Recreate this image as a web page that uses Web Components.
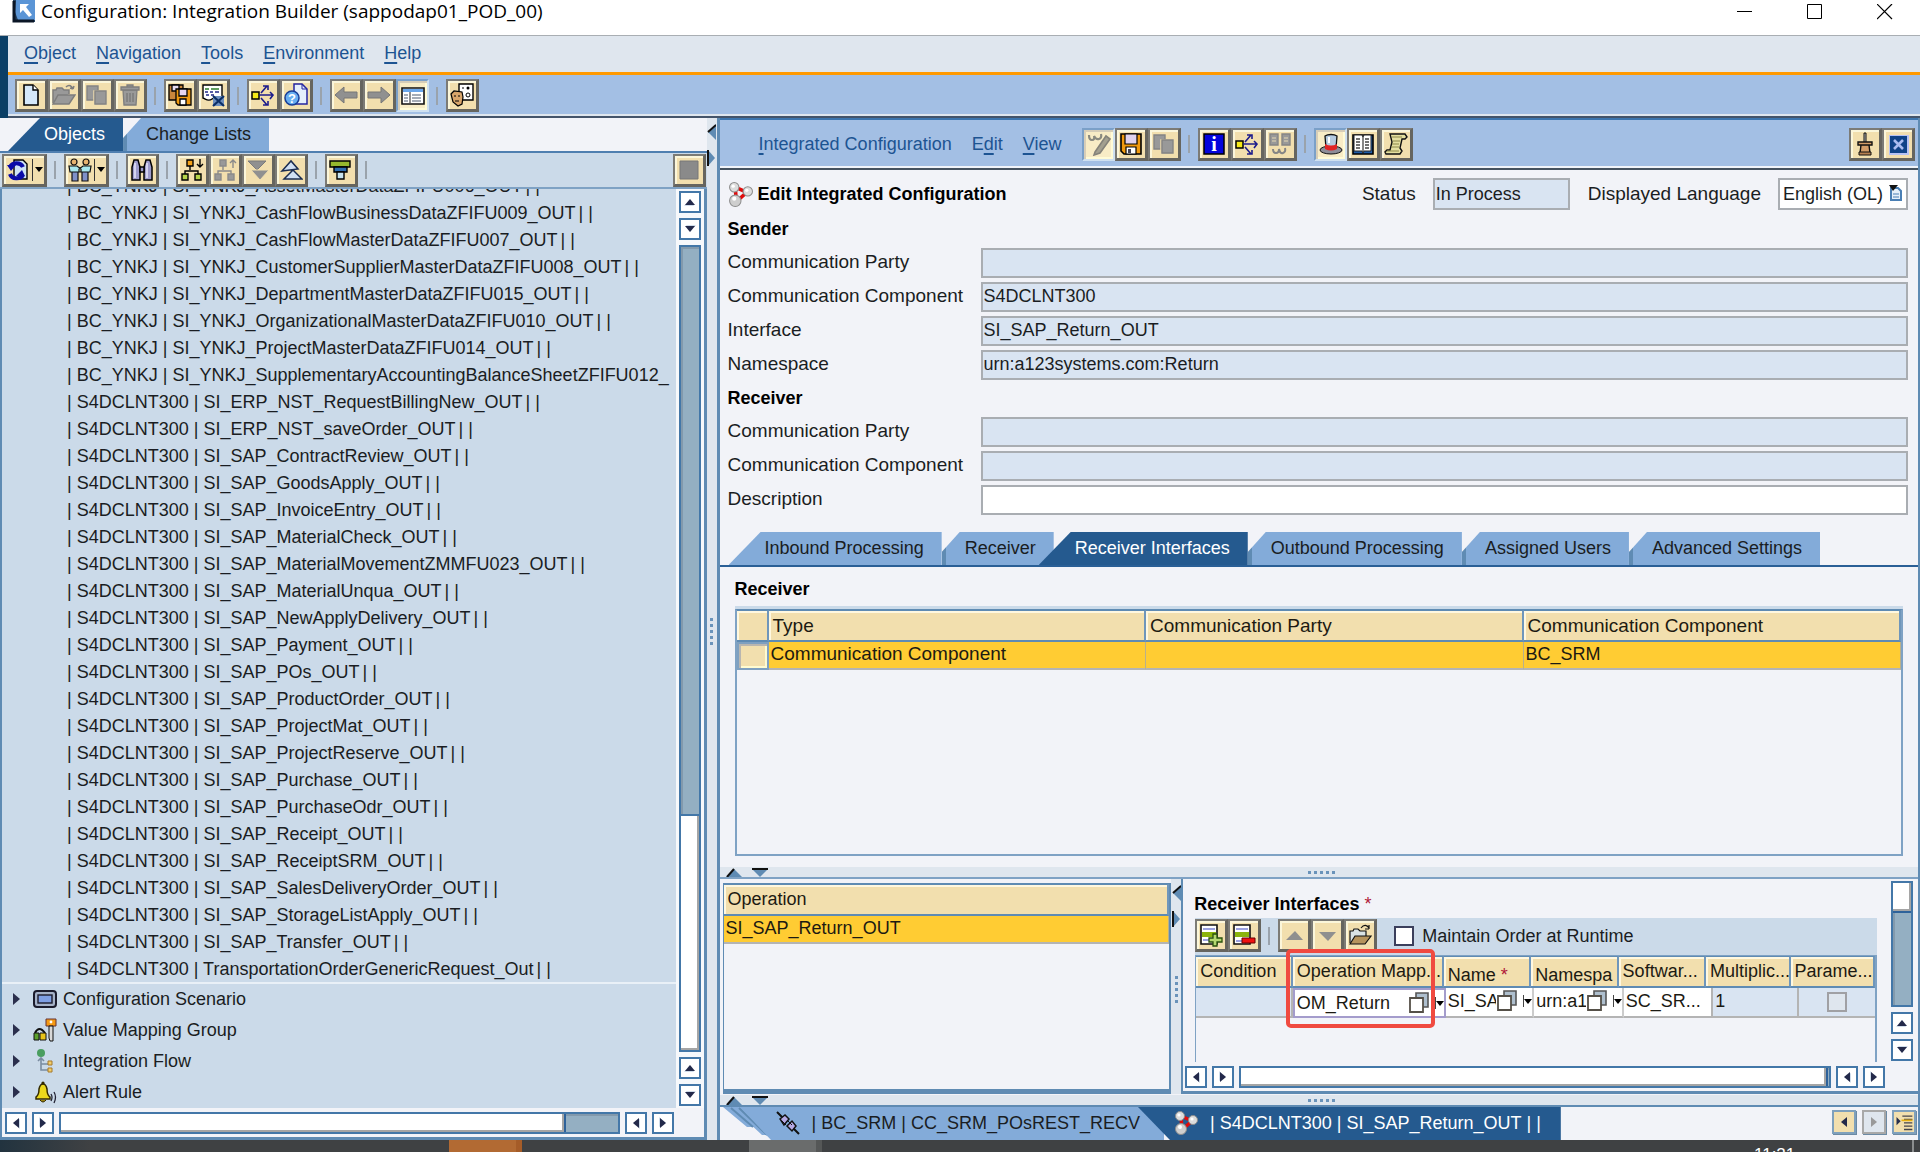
<!DOCTYPE html>
<html lang="en">
<head>
<meta charset="utf-8">
<title>Configuration: Integration Builder</title>
<style>
  html, body { margin: 0; height: 100%; }
  body { font: 18px/22px "Liberation Sans", Arial, sans-serif; color: #1a1d22; overflow: hidden; }
</style>
</head>
<body>
<builder-app></builder-app>

<script>
const ICONS = {
  newdoc: '<path d="M5 2h9l5 5v15H5z" fill="#d5e8fa" stroke="#000" stroke-width="1.6"/><path d="M14 2v5h5" fill="#fff" stroke="#000" stroke-width="1.4"/>',
  folderoff: '<g fill="#999" stroke="#7d7d7d" stroke-width="1.5"><path d="M1 20V7h3l1-2h5l2 2h5v4"/><path d="M1 21l5-9h17l-6 9z"/><path d="M14 4c3-3 6-1 7 2m0 0l-3-1m3 1l1-3" fill="none"/></g>',
  folder: '<g stroke="#111" stroke-width="1.2"><path d="M2 20V8h3l1-2h4l2 2h6v5" fill="#d9e2e4"/><path d="M2 21l5-8h16l-6 8z" fill="#b5935c"/><path d="M13 5c3-4 6-3 8 0m0 1h-4m4 0V2" fill="none"/></g>',
  copyoff: '<g fill="#999" stroke="#848484" stroke-width="1.4"><path d="M2 3h11v14H2z"/><path d="M9 8h12v14H9z" stroke="#f2dfae"/><path d="M10 8h11v13H10z"/></g>',
  trash: '<g fill="#999" stroke="#7d7d7d" stroke-width="1.3"><path d="M5 7h14l-1 15H6z"/><path d="M3 4h18v3H3zM9 4V2h6v2"/><path d="M9 10v9M12 10v9M15 10v9" stroke="#777"/></g>',
  saveall: '<g stroke="#000" stroke-width="1.3"><path d="M1 2h14v15H1z" fill="#c9863c"/><path d="M4 2h7v6H4z" fill="#e6dcf0"/><path d="M8 6h15v16H10l-2-2z" fill="#f09a10"/><path d="M11 6h8v7h-8z" fill="#e6d5ee"/><path d="M12 16h6v6h-6z" fill="#fff"/></g>',
  tablex: '<path d="M2 2h19v13c-4 3-6-2-10 1-4 3-6 0-9-1z" fill="#fff" stroke="#000" stroke-width="1.4"/><path d="M4 6h4m2 0h8" stroke="#2c7d2c" stroke-width="1.6"/><path d="M4 9h3m2 0h3m2 0h4M5 12h3m2 0h3" stroke="#222a88" stroke-width="1.6"/><path d="M12 13h11v10H12z" fill="#6c8fc0"/><path d="M12 13l11 10M23 13L12 23" stroke="#0c2f66" stroke-width="2.2"/>',
  where: '<path d="M1 9h7v7H1z" fill="#f6ea18" stroke="#000" stroke-width="1.5"/><path d="M8 12h14M19 9l3 3-3 4M10 10l6-7m-4 0h5v4M10 15l6 7m-4 0h5v-4" fill="none" stroke="#1c1c8c" stroke-width="1.6"/>',
  helpdoc: '<path d="M10 1h8l5 5v15H10z" fill="#e5effc" stroke="#2626a0" stroke-width="1.5"/><path d="M18 1v5h5" fill="none" stroke="#2626a0"/><circle cx="8" cy="15" r="7" fill="#68aef2" stroke="#173d98" stroke-width="1.5"/><text x="8" y="20" font-size="13" text-anchor="middle" fill="#fff" font-weight="bold">?</text>',
  left: '<path d="M1 12l9-8v5h13v6H10v5z" fill="#909090" stroke="#777"/>',
  right: '<path d="M23 12l-9-8v5H1v6h13v5z" fill="#909090" stroke="#777"/>',
  layout: '<path d="M1 4h22v16H1z" fill="#fff" stroke="#111" stroke-width="1.6"/><path d="M2 5h20v3H2z" fill="#6aa6ea"/><path d="M9 8v11" stroke="#222"/><path d="M3 11h4M3 14h4M3 17h4M11 11h9M11 14h9M11 17h9" stroke="#8891a0" stroke-width="1.4"/>',
  head: '<path d="M9 1h14v16H9z" fill="#fff" stroke="#000" stroke-width="1.4"/><circle cx="18" cy="5" r="1.5"/><circle cx="18" cy="12" r="2" fill="none" stroke="#000"/><path d="M12 5h2" stroke="#000"/><path d="M1 11l3-3 8 1 1 5-1 7-4 2-5-4z" fill="#d9a56a" stroke="#000" stroke-width="1.2"/><path d="M4 13h2M8 13h2M5 18h4" stroke="#000"/>',
  sync: '<path d="M8 2h9l4 4v15H8z" fill="#cfe3f7" stroke="#000" stroke-width="1.4"/><path d="M17 9A7 6 0 0 0 4 9M4 16a7 6 0 0 0 13 1" fill="none" stroke="#0b0ba8" stroke-width="4"/><path d="M1 7h9l-5 6zM19 18h-9l6-6z" fill="#0b0ba8"/>',
  people: '<g stroke="#111" stroke-width="1.2"><path d="M4 13h6v10H4zM14 13h6v10h-6z" fill="#7f90c8"/><path d="M1 8h8l4 3v3H2zM23 8h-8l-4 3v3h11z" fill="#a8e8ee"/><circle cx="6" cy="4" r="3" fill="#e8b470"/><circle cx="18" cy="4" r="3" fill="#e8b470"/></g>',
  bino: '<g fill="#9e9ccc" stroke="#000" stroke-width="1.5"><path d="M4 2h4l2 7v13H2V9zM16 2h4l2 7v13h-8V9z"/><path d="M10 9h4v5h-4z"/></g><path d="M5 5v15M17 5v15" stroke="#e6e6fa" stroke-width="1.5"/>',
  treedown: '<path d="M10 8v4M5 17v-4h13v4" fill="none" stroke="#000" stroke-width="1.4"/><path d="M7 2h6v6H7z" fill="#f3a21a" stroke="#000" stroke-width="1.4"/><path d="M2 16h6v6H2zM15 16h6v6h-6z" fill="#b5d34a" stroke="#000" stroke-width="1.4"/><path d="M20 1v8m-3-3l3 3 3-3" fill="none" stroke="#000" stroke-width="1.4"/>',
  treeup: '<g fill="#999" stroke="#8a8a8a" stroke-width="1.4"><path d="M10 8v4M5 17v-4h13v4" fill="none"/><path d="M7 2h6v6H7zM2 16h6v6H2zM15 16h6v6h-6z"/><path d="M20 10V2m-3 3l3-3 3 3" fill="none"/></g>',
  downs: '<path d="M2 3h18l-9 9z" fill="#909090" stroke="#7b7b7b"/><path d="M5 12h18l-9 10z" fill="#909090" stroke="#f2dfae"/>',
  ups: '<path d="M3 13l9-10 7 8zM5 21h18l-9-9z" fill="#d0e0f4" stroke="#1a2c50" stroke-width="1.5"/>',
  filter: '<path d="M1 3h20v6H1z" fill="#96b82e" stroke="#000" stroke-width="1.4"/><path d="M5 9h13v5H5z" fill="#2f6db0" stroke="#000" stroke-width="1.4"/><path d="M8 14h7v7H8z" fill="#c8e4f0" stroke="#000" stroke-width="1.4"/>',
  stop: '<path d="M3 3h18v18H3z" fill="#8a8a8a" stroke="#777"/>',
  pencil: '<path d="M8 20L19 4l4 3L13 21l-6 2z" fill="#a3a090" stroke="#85837a" stroke-width="1.6"/><path d="M2 3q0 5 3 5t2-4q2 4 5 3t2-5" fill="none" stroke="#8a8a80" stroke-width="2.2"/>',
  save: '<path d="M2 2h20v20H5l-3-3z" fill="#f09a10" stroke="#000" stroke-width="1.6"/><path d="M6 2h12v10H6z" fill="#e0d2ee" stroke="#000" stroke-width="1.2"/><path d="M7 15h10v7H7z" fill="#fff" stroke="#000" stroke-width="1.2"/><path d="M9 17h3v4H9z" fill="#445"/>',
  info: '<path d="M2 2h20v20H2z" fill="#0404dc" stroke="#000" stroke-width="1.5"/><text x="12" y="19" text-anchor="middle" font-size="20" font-weight="bold" font-family="Liberation Serif" fill="#fff">i</text>',
  compare: '<g fill="#999" stroke="#858585" stroke-width="1.4"><path d="M2 2h8v11H2zM14 2h8v11h-8z"/><path d="M5 17q0 4 3 4t3-4q1 5 4 4t2-5" fill="none" stroke-width="2"/></g><path d="M4 6h4M4 9h4M16 6h4M16 9h4" stroke="#e6d9b4"/>',
  hat: '<ellipse cx="12" cy="18" rx="11" ry="4" fill="#8d8d98" stroke="#111"/><path d="M6 4c3-2 9-2 12 0l-1 12H7z" fill="#b4cae0" stroke="#111" stroke-width="1.3"/><path d="M6 12c4 2 8 2 12 0v5c-4 2-8 2-12 0z" fill="#e02424"/><path d="M10 5v6" stroke="#fff" stroke-width="2"/>',
  book: '<path d="M2 3h20v19H2z" fill="#1e5ca8" stroke="#000" stroke-width="1.6"/><path d="M3 3h8l1 2 1-2h7v16h-7l-1 2-1-2H3z" fill="#fff" stroke="#222"/><path d="M12 4v16M5 7h4M5 10h4M5 13h4M5 16h4M14 7h4M14 10h4M14 13h4M14 16h4" stroke="#444" stroke-width="1.3"/>',
  scroll: '<path d="M6 2h15l2 3-2 2h-3l-2 9 2 3-2 3H2l-1-2 2-2h3l2-8z" fill="#e4dfa0" stroke="#111" stroke-width="1.4"/><path d="M8 5h10M9 9h7M8 12h7M7 15h8M3 19h12" stroke="#8c874a" stroke-width="1.2"/>',
  pin: '<path d="M11 1h2v10h-2z" fill="#bbb" stroke="#111"/><path d="M5 10h14v3H5zM8 13h8l1 8H7z" fill="#d29c68" stroke="#111" stroke-width="1.4"/><path d="M6 20h12v3H6z" fill="#b78050" stroke="#111"/>',
  xbox: '<path d="M3 3h20v20H3z" fill="#b5c2f4"/><path d="M4 4h17v17H4z" fill="#0f4387"/><path d="M8 8l9 9M17 8l-9 9" stroke="#a9bcf0" stroke-width="2.6"/>',
  addrow: '<path d="M2 2h16v19H2z" fill="#fff" stroke="#111" stroke-width="1.6"/><path d="M4 5h12v2H4zM4 16h9v2H4z" fill="#9ca2e0"/><path d="M3 9h14v5H3z" fill="#8bb40c"/><path d="M14 11h4v4h5v4h-5v4h-4v-4h-4v-4h4z" fill="#b5d870" stroke="#28500c" stroke-width="1.3"/>',
  delrow: '<path d="M2 2h16v19H2z" fill="#fff" stroke="#111" stroke-width="1.6"/><path d="M4 5h12v2H4zM4 17h8v2H4z" fill="#9ca2e0"/><path d="M3 9h14v5H3z" fill="#8bb40c"/><path d="M10 15h13v5H10z" fill="#f01010" stroke="#600"/>',
  upoff: '<path d="M4 17l9-9 8 9z" fill="#8f8f8f"/>',
  downoff: '<path d="M4 9h17l-8 9z" fill="#8f8f8f"/>',
  logo: '<path d="M1 0h22v22H1z" fill="#24405e"/><path d="M4 0h19v20H6L3 12z" fill="#5b95d6"/><path d="M8 4h9l-3 3 6 8-3 2-6-7-3 3z" fill="#fff"/><path d="M2 1v20h20" fill="none" stroke="#0b1626" stroke-width="3"/>',
  molecule: '<path d="M7 5l9 4M7 6L8 18M9 18l10-9" stroke="#e00c0c" stroke-width="3.4"/><g stroke="#8d8d8d"><circle cx="6" cy="5" r="4.5" fill="#dcdcdc"/><circle cx="19" cy="9" r="4.5" fill="#dcdcdc"/><circle cx="7" cy="18" r="5.5" fill="#cecece"/></g><g fill="#fff"><circle cx="5" cy="4" r="1.6"/><circle cx="18" cy="8" r="1.6"/><circle cx="6" cy="16" r="2"/></g>',
  plug: '<path d="M1 1l6 6M17 17l6 6" stroke="#111" stroke-width="2"/><g fill="#b6a9e4" stroke="#111" stroke-width="1.5"><path d="M4 8l5-4 4 4-5 6zM11 15l5-5 4 5-4 5z"/></g><path d="M6 10l4 4M12 10l4 4" stroke="#111"/>',
  scenario: '<rect x="1" y="4" width="22" height="16" rx="3" fill="#a6b2c8" stroke="#1b1b2c" stroke-width="2"/><rect x="5" y="8" width="14" height="8" fill="#7f9fe4" stroke="#1b1b2c" stroke-width="1.4"/>',
  keylock: '<path d="M2 15q4-8 10 0" fill="none" stroke="#111" stroke-width="2"/><path d="M1 15h5v7H1z" fill="#5ca02c" stroke="#111"/><path d="M7 15h6v7H7z" fill="#e8c41c" stroke="#111"/><path d="M13 1h10v7H13z" fill="#f59a14" stroke="#633"/><circle cx="18" cy="4" r="1.4" fill="#fff"/><path d="M16 8h4v15h-3l-1-3z" fill="#d9d9d9" stroke="#111"/>',
  flow: '<circle cx="8" cy="4" r="4" fill="#4a9e60"/><path d="M8 9v12h8M8 15h7M5 12l3-3 3 3" fill="none" stroke="#7a8ca0" stroke-width="1.6"/><path d="M15 12h4v4h-4zM15 19h4v4h-4z" fill="#f2cd68" stroke="#a5782c"/>',
  bell: '<path d="M3 17q3-2 3-8 1-5 4-5t4 5q0 6 3 8v2H3z" fill="#ecd81c" stroke="#332a00" stroke-width="1.5"/><circle cx="10" cy="3" r="1.6" fill="#332a00"/><path d="M7 20q3 4 6 0" fill="#9c8310" stroke="#332a00"/><path d="M18 14q2 3 0 7M21 12q3 5 0 11" fill="none" stroke="#223" stroke-width="1.3"/>',
  pick: '<path d="M8 2h12v14H8z" fill="#aebfce" stroke="#555" stroke-width="1.6"/><path d="M2 7h13v14H2z" fill="#fff" stroke="#555048" stroke-width="1.8"/>',
  list: '<path d="M3 6l5 5-5 5z" fill="#28304c"/><path d="M10 5h12M12 9h10M12 13h10M12 17h10M12 21h10" stroke="#44444c" stroke-width="1.6"/><path d="M9 9h13v2H9z" fill="#e8b010"/>'
};
const svg = (name, size = 24) =>
  `<svg width="${size}" height="${size}" viewBox="0 0 24 24" aria-hidden="true">${ICONS[name]}</svg>`;

function define(tag, render) {
  customElements.define(tag, class extends HTMLElement {
    connectedCallback() {
      if (this.shadowRoot) return;
      this.attachShadow({ mode: 'open' }).innerHTML =
        '<style>*{box-sizing:border-box}:host{display:block;box-sizing:border-box}button,input,select{font:inherit;color:inherit;margin:0;border-radius:0}svg{display:block;flex:none}</style>' + render(this);
    }
  });
}

/* ---------- small parts ---------- */

define('tool-button', el => `
<style>
  :host { flex: none; }
  button { width: 33px; height: 33px; padding: 0; display: flex; align-items: center; justify-content: center;
    background: #f2dfae; border: 2px solid #7c7b76; border-right: 3px solid #66655f; border-bottom: 3px solid #66655f; box-shadow: inset 2px 2px #fbf6da; }
  :host([menu]) button { width: 45px; }
  :host([pressed]) button { background: #f8ecc6; border: 2px solid #7ba0c8; border-right-color: #cfe0f0; border-bottom-color: #cfe0f0; box-shadow: inset 2px 2px #d6cdb8, inset -2px -2px #fffbd6; }
  i { width: 1px; height: 22px; background: #333; margin-left: 2px; }
  b { border: 4px solid transparent; border-top: 5px solid #000; border-bottom: 0; margin-left: 2px; }
</style>
<button type="button" aria-label="${el.getAttribute('icon')}">${svg(el.getAttribute('icon'))}${el.hasAttribute('menu') ? '<i></i><b></b>' : ''}</button>`);

define('tool-sep', () => `
<style>:host { flex: none; width: 2px; height: 18px; margin: 0 8px 0 7px; background: #9aa3ac; }</style>`);

define('menu-list', el => `
<style>
  :host { display: flex; gap: 20px; color: #1d5492; }
  a { color: inherit; text-decoration: none; white-space: nowrap; }
  u { text-underline-offset: 3px; text-decoration-thickness: 2px; }
</style>
${el.getAttribute('items').split(',').map(t => `<a href="#">${t.replace(/_(.)/, '<u>$1</u>')}</a>`).join('')}`);

/* A scroll bar with a pair of arrows at either end; "parts" gives the flex shares before, in and after the thumb. */
define('scroll-bar', el => {
  const v = el.hasAttribute('vertical');
  const [a, t, b] = el.getAttribute('parts').split(',');
  const arrow = back => `<button type="button" aria-label="${back ? 'back' : 'forward'}"><svg width="14" height="14" viewBox="0 0 14 14"><g transform="rotate(${(v ? 90 : 0) + (back ? 0 : 180)} 7 7)"><path d="M11 3v10l-7-6z" fill="#cfdcea"/><path d="M10 2v10L4 7z" fill="#23294a"/></g></svg></button>`;
  const pair = arrow(true) + arrow(false);
  return `
<style>
  :host { display: flex; gap: 5px; flex-direction: ${v ? 'column' : 'row'}; }
  button { flex: none; width: 22px; height: 22px; padding: 0; display: grid; place-items: center; background: #fff; border: 2px solid #4377a8; }
  .track { flex: 1; display: flex; flex-direction: inherit; border: 2px solid #4377a8; background: #94afc2; ${v ? 'width' : 'height'}: 22px; box-shadow: inset 2px 2px #8299ac; }
  .thumb { background: #fff; box-shadow: inset -2px -2px #a5a5a5; flex: ${t}; }
  .a { flex: ${a}; } .b { flex: ${b}; }
  .a:not([hidden]) + .thumb { border-${v ? 'top' : 'left'}: 2px solid #4377a8; }
  .thumb:has(+ .b:not([hidden])) { border-${v ? 'bottom' : 'right'}: 2px solid #2e629a; }
</style>
${el.hasAttribute('no-lead') ? '' : pair}
<div class="track"><div class="a" ${a === '0' ? 'hidden' : ''}></div><div class="thumb"></div><div class="b" ${b === '0' ? 'hidden' : ''}></div></div>
${pair}`;
});

define('split-bar', el => {
  const v = el.hasAttribute('vertical');
  return `
<style>
  :host { flex: none; display: flex; align-items: center; background: #dfe6ee; overflow: hidden; flex-direction: ${v ? 'column' : 'row'}; ${v ? 'width: 10px' : 'height: 10px'}; }
  .arrows { flex: 1; display: flex; gap: 10px; flex-direction: inherit; ${v ? 'padding-top: 6px' : 'padding-left: 6px'}; }
  .dots { flex: none; ${v ? 'width: 3px; height: 28px' : 'height: 3px; width: 28px'}; background: repeating-linear-gradient(${v ? '180deg' : '90deg'}, #6a93ba 0 3px, transparent 3px 6px); }
  .rest { flex: 1; }
</style>
<div class="arrows">${v
    ? '<svg width="9" height="16"><path d="M9 0v16L1 8z" fill="#5f8bb3"/><path d="M9 1L1 8" stroke="#111" stroke-width="2"/></svg><svg width="9" height="16"><path d="M1 0v16l7-8z" fill="#5f8bb3"/><path d="M1 0v16" stroke="#111" stroke-width="2"/></svg>'
    : '<svg width="16" height="9"><path d="M0 9h16L8 1z" fill="#5f8bb3"/><path d="M1 9l7-8" stroke="#111" stroke-width="2"/></svg><svg width="16" height="9"><path d="M0 1h16L8 9z" fill="#5f8bb3"/><path d="M0 1h16" stroke="#111" stroke-width="2"/></svg>'}</div>
<div class="dots"></div><div class="rest"></div>`;
});

/* Tab: "first" has a full slope, plain ones are bevelled, "active" lies over its left neighbour. */
define('tab-item', el => `
<style>
  :host { flex: none; position: relative; height: 33px; background: linear-gradient(90deg, #5f8bb3 4px, #83abd9 4px); clip-path: polygon(0 20px, 18px 0, 100% 0, 100% 100%, 0 100%); }
  :host([first]), :host([active]) { clip-path: polygon(32px 0, 100% 0, 100% 100%, 0 100%); background: #83abd9; }
  :host([active]) { background: #255a8f; color: #fff; z-index: 1; }
  :host([active]:not([first])) { margin-left: -15px; }
  button { height: 31px; border: 0; background: none; padding: 0 18px 0 23px; white-space: nowrap; display: flex; align-items: center; }
  :host([first]) button, :host([active]) button { padding-left: 36px; }
  :host([doc]) { margin-left: 0; }
  :host([doc][first]) { clip-path: none; background: none; }
  :host([doc]) button { gap: 12px; }
  :host([doc][first]) button { padding: 0 24px 0 56px; position: relative; }
  :host([doc][active]) { margin-left: -26px; clip-path: polygon(0 0, 100% 0, 100% 100%, 32px 100%); }
  :host([doc][active]) button { padding-right: 20px; }
  .stack { position: absolute; inset: 0; width: 100%; height: 33px; }
</style>
${el.hasAttribute('doc') && el.hasAttribute('first') ? '<svg class="stack" aria-hidden="true"><path d="M3 0h14l20 20h-10zM12 0h14l24 28h-8z" fill="#83abd9"/><path d="M11 1l22 19M19 1l28 27" stroke="#5f8bb3" stroke-width="2" fill="none"/><path d="M20 0h1000v33H51z" fill="#83abd9"/></svg>' : ''}
<button type="button" role="tab"><slot></slot></button>`);

/* Labelled read-only or editable text line of the form. */
define('form-line', el => `
<style>
  :host { display: flex; align-items: center; height: 30px; }
  label { width: 253px; flex: none; font-size: 19px; padding-bottom: 2px; }
  input { flex: 1; min-width: 0; height: 30px; border: 2px solid #a9adb2; background: #d9e4f2; padding: 0 1px 2px; outline: none; }
  :host([editable]) input { background: #fff; }
</style>
<label for="f">${el.getAttribute('label')}</label><input id="f" value="${el.getAttribute('value') || ''}" ${el.hasAttribute('editable') ? '' : 'readonly'}>`);

/* ---------- window frame ---------- */

define('title-bar', () => `
<style>
  :host { flex: none; display: flex; align-items: flex-start; height: 36px; background: #fff; border-bottom: 1px solid #a9aeb3; padding-left: 12px; color: #000; }
  h1 { flex: 1; margin: 0 0 0 5px; font: 400 19px/22px "Open Sans", sans-serif; }
  button { width: 70px; height: 24px; padding: 0; border: 0; background: none; display: grid; place-items: center; }
</style>
${svg('logo')}<h1><slot></slot></h1>
<button aria-label="Minimize"><svg width="16" height="16"><path d="M0 7.5h15" stroke="#000"/></svg></button>
<button aria-label="Maximize"><svg width="16" height="16"><path d="M.5.5h14v14H.5z" fill="none" stroke="#000"/></svg></button>
<button aria-label="Close"><svg width="16" height="16"><path d="M0 0l15 15M15 0L0 15" stroke="#000" stroke-width="1.2"/></svg></button>`);

define('main-bar', () => `
<style>
  :host { flex: none; border-left: 8px solid #0b3f66; }
  .menu { height: 36px; background: #dfe6ee; padding: 0 16px 2px; display: flex; align-items: center; }
  .tools { height: 46px; border-top: 3px solid #ff9900; border-bottom: 2px solid #44546a; background: #a3bfe4; padding: 0 7px; display: flex; align-items: center; box-shadow: inset 0 -2px #dfe6ee; }
</style>
<div class="menu"><menu-list items="_Object,_Navigation,_Tools,_Environment,_Help"></menu-list></div>
<div class="tools">
  <tool-button icon="newdoc"></tool-button><tool-button icon="folderoff"></tool-button><tool-button icon="copyoff"></tool-button><tool-button icon="trash"></tool-button><tool-sep></tool-sep>
  <tool-button icon="saveall"></tool-button><tool-button icon="tablex"></tool-button><tool-sep></tool-sep>
  <tool-button icon="where"></tool-button><tool-button icon="helpdoc"></tool-button><tool-sep></tool-sep>
  <tool-button icon="left"></tool-button><tool-button icon="right"></tool-button><tool-button icon="layout" pressed></tool-button><tool-sep></tool-sep>
  <tool-button icon="head"></tool-button>
</div>`);

define('task-bar', () => `
<style>
  :host { flex: none; height: 12px; overflow: hidden; background: #3f4143; display: flex; color: #fff; font-size: 17px; }
  .pad { width: 449px; background: linear-gradient(90deg, #22333f, #3f4143 20%); } .run { width: 73px; background: #b26a33; border-right: 6px solid #a55c28; }
  .gap { width: 227px; } .idle { width: 73px; background: #6a6c6c; border-right: 6px solid #555757; }
  .fill { flex: 1; } time { width: 158px; padding-top: 4px; } .peek { width: 8px; border-left: 2px solid #8b8d8e; }
</style>
<div class="pad"></div><div class="run"></div><div class="gap"></div><div class="idle"></div><div class="fill"></div><time>11:21</time><div class="peek"></div>`);

/* ---------- object tree ---------- */

const B = 'BC_YNKJ', S = 'S4DCLNT300';
const NODES = [
  [B, 'SI_YNKJ_AssetMasterDataZFIFU006_OUT'], [B, 'SI_YNKJ_CashFlowBusinessDataZFIFU009_OUT'], [B, 'SI_YNKJ_CashFlowMasterDataZFIFU007_OUT'],
  [B, 'SI_YNKJ_CustomerSupplierMasterDataZFIFU008_OUT'], [B, 'SI_YNKJ_DepartmentMasterDataZFIFU015_OUT'],
  [B, 'SI_YNKJ_OrganizationalMasterDataZFIFU010_OUT'], [B, 'SI_YNKJ_ProjectMasterDataZFIFU014_OUT'],
  [B, 'SI_YNKJ_SupplementaryAccountingBalanceSheetZFIFU012_'],
  ...['SI_ERP_NST_RequestBillingNew', 'SI_ERP_NST_saveOrder', 'SI_SAP_ContractReview', 'SI_SAP_GoodsApply', 'SI_SAP_InvoiceEntry', 'SI_SAP_MaterialCheck',
    'SI_SAP_MaterialMovementZMMFU023', 'SI_SAP_MaterialUnqua', 'SI_SAP_NewApplyDelivery', 'SI_SAP_Payment', 'SI_SAP_POs', 'SI_SAP_ProductOrder', 'SI_SAP_ProjectMat',
    'SI_SAP_ProjectReserve', 'SI_SAP_Purchase', 'SI_SAP_PurchaseOdr', 'SI_SAP_Receipt', 'SI_SAP_ReceiptSRM', 'SI_SAP_SalesDeliveryOrder', 'SI_SAP_StorageListApply',
    'SI_SAP_Transfer'].map(n => [S, n + '_OUT']),
  [S, 'TransportationOrderGenericRequest_Out']
];
define('object-tree', () => `
<style>
  :host { flex: 1; min-width: 0; overflow: hidden; display: flex; flex-direction: column; justify-content: flex-end; }
  ul { list-style: none; margin: 0; padding: 0; flex: none; }
  .leaf { height: 27px; line-height: 27px; padding-left: 65px; white-space: pre; }
  .leaf span { padding-left: 3px; }
  .group { height: 31px; display: flex; align-items: center; padding-left: 11px; }
  .groups { box-shadow: 0 -1px #e9f0f7, inset 0 1px #e9f0f7; padding-bottom: 1px; }
  .group span { margin-left: 6px; }
  .twist { border: 6px solid transparent; border-left: 7px solid #2b2f4d; border-right: 0; margin-right: 13px; }
</style>
<ul>${NODES.map(([c, n]) => `<li class="leaf">| ${c}<span>| ${n}</span>${n.endsWith('_') ? '' : '<span>| |</span>'}</li>`).join('')}</ul>
<ul class="groups">${[['scenario', 'Configuration Scenario'], ['keylock', 'Value Mapping Group'], ['flow', 'Integration Flow'], ['bell', 'Alert Rule']]
    .map(([i, t]) => `<li class="group"><i class="twist"></i>${svg(i)}<span>${t}</span></li>`).join('')}</ul>`.replace(/<span>\| SI|<span>\| Tr/g, m => m.replace('<span>', '<span class="sep">')).replace('.leaf span {', '.leaf .sep { margin-left: 2px; }\n  .leaf span {'));

define('object-panel', () => `
<style>
  :host { flex: none; width: 36.8%; display: flex; flex-direction: column; background: #f2f3f8; }
  .tabs { height: 33px; display: flex; padding-left: 8px; flex: none; }
  .box { flex: 1; min-height: 0; display: flex; flex-direction: column; border-top: 2px solid #4f7fb0; }
  .tools { height: 36px; flex: none; background: #cbdae9; border-bottom: 2px solid #7fa2c4; padding: 0 1px 0 2px; display: flex; align-items: center; }
  .grow { flex: 1; }
  .view { flex: 1; min-height: 0; display: flex; border: 3px solid #5f8bb3; border-width: 0 3px 3px 2px; flex-direction: column; }
  .top { flex: 1; min-height: 0; display: flex; background: #cbdae9; }
  .v { background: #f6f8fb; padding: 2px 3px; }
  .h { padding: 4px 30px 3px 3px; }
</style>
<div class="tabs"><tab-item first active>Objects</tab-item><tab-item>Change Lists</tab-item></div>
<div class="box">
  <div class="tools">
    <tool-button icon="sync" menu></tool-button><tool-sep></tool-sep><tool-button icon="people" menu></tool-button><tool-sep></tool-sep>
    <tool-button icon="bino"></tool-button><tool-sep></tool-sep>
    <tool-button icon="treedown"></tool-button><tool-button icon="treeup"></tool-button><tool-button icon="downs"></tool-button><tool-button icon="ups"></tool-button><tool-sep></tool-sep>
    <tool-button icon="filter"></tool-button><tool-sep></tool-sep><div class="grow"></div><tool-button icon="stop"></tool-button>
  </div>
  <div class="view">
    <div class="top"><object-tree></object-tree><scroll-bar class="v" vertical parts="571,235,0"></scroll-bar></div>
    <scroll-bar class="h" parts="0,506,52"></scroll-bar>
  </div>
</div>`);

/* ---------- editor ---------- */

define('editor-bar', () => `
<style>
  :host { flex: none; height: 52px; display: flex; align-items: center; background: #a3bfe4; border-top: 2px solid #3d75ae; border-bottom: 2px solid #45525f; box-shadow: inset 0 -2px #f0f4fa; padding: 0 3px 0 39px; }
  menu-list { margin-right: 21px; } .grow { flex: 1; }
</style>
<menu-list items="_Integrated Configuration,E_dit,_View"></menu-list>
<tool-button icon="pencil" pressed></tool-button><tool-button icon="save"></tool-button><tool-button icon="copyoff"></tool-button><tool-sep></tool-sep>
<tool-button icon="info"></tool-button><tool-button icon="where"></tool-button><tool-button icon="compare"></tool-button><tool-sep></tool-sep>
<tool-button icon="hat" pressed></tool-button><tool-button icon="book"></tool-button><tool-button icon="scroll"></tool-button>
<div class="grow"></div><tool-button icon="pin"></tool-button><tool-button icon="xbox"></tool-button>`);

define('config-form', () => `
<style>
  :host { flex: none; padding: 7px 10px 0 8px; color: #1a1d22; }
  .head { display: flex; align-items: center; height: 34px; }
  h2 { font: bold 18px/22px "Liberation Sans", sans-serif; color: #000; margin: 0 auto 0 5px; }
  h3 { font: bold 18px/22px "Liberation Sans", sans-serif; color: #000; margin: 0; height: 37px; padding-top: 7px; }
  .head label { margin-right: 17px; font-size: 19px; }
  .head input { width: 137px; height: 32px; border: 2px solid #a9adb2; background: #d9e4f2; padding: 0 1px; margin-right: 18px; }
  .pick { position: relative; width: 130px; }
  select { appearance: none; width: 100%; height: 32px; border: 2px solid #a9adb2; background: #fff; padding: 0 0 0 3px; }
  .pick svg { position: absolute; right: 5px; top: 7px; pointer-events: none; }
  .lines { display: grid; gap: 4px; }
</style>
<div class="head">${svg('molecule', 25)}<h2>Edit Integrated Configuration</h2>
  <label for="st">Status</label><input id="st" value="In Process" readonly>
  <label for="lang">Displayed Language</label>
  <div class="pick"><select id="lang"><option>English (OL)</option></select><svg width="14" height="16"><path d="M2 3h7l3 3v9H2z" fill="#e6f0fa" stroke="#4a7fb5" stroke-width="2"/><path d="M4 9h6M4 12h6" stroke="#4a7fb5"/><path d="M0 0h9L4 6z" fill="#111"/></svg></div>
</div>
<h3>Sender</h3>
<div class="lines">
  <form-line label="Communication Party"></form-line><form-line label="Communication Component" value="S4DCLNT300"></form-line>
  <form-line label="Interface" value="SI_SAP_Return_OUT"></form-line><form-line label="Namespace" value="urn:a123systems.com:Return"></form-line>
</div>
<h3>Receiver</h3>
<div class="lines">
  <form-line label="Communication Party"></form-line><form-line label="Communication Component"></form-line><form-line label="Description" editable></form-line>
</div>`);

const GRID_CSS = `
  table { width: 100%; border-collapse: separate; border-spacing: 0; display: block; }
  thead, tbody { display: block; }
  tr { display: grid; }
  th, td { padding: 0 4px; white-space: nowrap; overflow: hidden; text-align: left; font-weight: 400; color: #1c1a12; }
  th { height: 32px; line-height: 29px; background: #f2dfae; border-top: 1px solid #5f8bb3; border-bottom: 2px solid #5f8bb3; border-right: 2px solid #6f96bb; box-shadow: inset 2px 2px #fff8e0; }
  td { height: 28px; line-height: 24px; background: #ffcc33; border-right: 1px solid #b9b08c; border-bottom: 2px solid #b4b4b4; padding-left: 2px; }`;

define('receiver-panel', () => `
<style>${GRID_CSS}
  :host { flex: 1; min-height: 0; display: flex; flex-direction: column; padding: 11px 15px 11px 15px; border-top: 2px solid #2a5f96; }
  h3 { font: bold 18px/22px "Liberation Sans", sans-serif; color: #000; margin: 0 0 9px; }
  .grid { flex: 1; border: 2px solid #7fa2c4; border-top: 1px solid #5f8bb3; box-shadow: 0 -3px #cbdae9; }
  tr { grid-template-columns: 32px 1fr 1fr 1fr; }
  td.sel { background: #f2dfae; border: 2px solid #7fa0c0; box-shadow: inset 2px 2px #b9b6b0, inset -2px -2px #fffbd0; }
  td, th { font-size: 19px; }
  td.id { font-size: 18px; }
</style>
<h3>Receiver</h3>
<div class="grid"><table>
  <thead><tr><th></th><th>Type</th><th>Communication Party</th><th>Communication Component</th></tr></thead>
  <tbody><tr><td class="sel"></td><td>Communication Component</td><td></td><td class="id">BC_SRM</td></tr></tbody>
</table></div>`);

define('operation-list', () => `
<style>${GRID_CSS}
  :host { flex: 448; min-width: 0; border: 2px solid #5f8bb3; border-top: 1px solid #5f8bb3; border-left-width: 1px; margin-top: 4px; }
</style>
<table><thead><tr><th>Operation</th></tr></thead><tbody><tr><td>SI_SAP_Return_OUT</td></tr></tbody></table>`);

/* Cell with a text, a picker icon and a drop-down arrow. */
define('pick-cell', el => `
<style>
  :host { display: flex; align-items: center; height: 26px; }
  input { flex: 1; min-width: 0; width: 10px; height: 24px; border: 0; padding: 0 0 0 2px; background: none; outline: none; }
  i { width: 1px; height: 12px; background: #444; margin-left: 3px; }
  b { border: 4px solid transparent; border-top: 5px solid #000; border-bottom: 0; }
</style>
<input aria-label="${el.getAttribute('label')}" value="${el.getAttribute('value')}">${svg('pick')}<i></i><b></b>`);

define('interface-panel', () => `
<style>${GRID_CSS}
  :host { flex: 731; min-width: 0; display: flex; border-left: 2px solid #5f8bb3; border-bottom: 3px solid #5f8bb3; padding: 1px 3px 0 1px; }
  .main { flex: 1; min-width: 0; display: flex; flex-direction: column; }
  h3 { font: bold 18px/22px "Liberation Sans", sans-serif; color: #000; margin: 13px 0 3px 10px; }
  em { color: #b01838; font-style: normal; font-weight: 400; }
  .tools { margin: 0 14px 0 11px; height: 37px; background: #cbdae9; display: flex; align-items: center; flex: none; padding-bottom: 2px; }
  .tools input { appearance: none; width: 20px; height: 20px; border: 2px solid #3b3f5c; background: #fff; margin: 0 8px 0 17px; }
  .grid { position: relative; flex: 1; margin: 0 14px 0 11px; border: 2px solid #7fa2c4; border-width: 1px 2px 0 1px; }
  thead tr { grid-template-columns: 96fr 150fr 87fr 87fr 87fr 84fr 84fr; }
  tbody tr { grid-template-columns: 96fr 152fr 88fr 89fr 89fr 85fr 76fr; }
  td { height: 30px; line-height: 27px; padding: 0 2px; background: #fff; border-right: 2px solid #b4b4b4; }
  td.ro { background: #d9e4f2; }
  td.edit { padding: 0; border-right-color: #ccc; }
  td.focus { border: 2px solid #a49ccc; }
  td.mark { text-align: center; border-right: 0; }
  td.mark input { appearance: none; width: 20px; height: 20px; border: 2px solid #a0a0a4; background: #dfe6ee; vertical-align: middle; }
  .low { padding-top: 5px; line-height: 26px; }
  .h { margin: 4px 6px 3px 1px; }
  .v { margin: 1px 2px 30px 0; }
  .frame { position: absolute; left: 90px; top: -7px; width: 149px; height: 79px; border: 4px solid #f04a40; border-radius: 5px; pointer-events: none; }
</style>
<div class="main">
  <h3>Receiver Interfaces <em>*</em></h3>
  <div class="tools"><tool-button icon="addrow"></tool-button><tool-button icon="delrow"></tool-button><tool-sep></tool-sep>
    <tool-button icon="upoff"></tool-button><tool-button icon="downoff"></tool-button><tool-button icon="folder"></tool-button>
    <input type="checkbox" id="keep"><label for="keep">Maintain Order at Runtime</label></div>
  <div class="grid"><table>
    <thead><tr><th>Condition</th><th>Operation Mapp...</th><th class="low">Name <em>*</em></th><th class="low">Namespa</th><th>Softwar...</th><th>Multiplic...</th><th>Parame...</th></tr></thead>
    <tbody><tr><td class="ro"></td><td class="edit focus"><pick-cell label="Operation Mapping" value="OM_Return"></pick-cell></td>
      <td class="edit"><pick-cell label="Name" value="SI_SAP"></pick-cell></td><td class="edit"><pick-cell label="Namespace" value="urn:a1"></pick-cell></td>
      <td>SC_SR...</td><td class="ro">1</td><td class="ro mark"><input type="checkbox" disabled aria-label="Parameters"></td></tr></tbody>
  </table><div class="frame"></div></div>
  <scroll-bar class="h" parts="0,584,1"></scroll-bar>
</div>
<scroll-bar class="v" vertical no-lead parts="0,29,97"></scroll-bar>`);

define('document-bar', () => `
<style>
  :host { flex: none; display: flex; height: 33px; background: #f2f3f8; padding-right: 2px; }
  .grow { flex: 1; }
  .end { padding-left: 5px; }
  button { width: 24px; height: 24px; margin: 3px 0 0 6px; padding: 0; display: grid; place-items: center; border: 2px solid #7fa0bc; background: #f2dfae; box-shadow: 1px 1px #6c8aa4; }
  button:disabled { background: #dfe6ee; border-color: #a8a8a8; }
</style>
<tab-item doc first>${svg('plug')}<span>| BC_SRM | CC_SRM_POsREST_RECV</span></tab-item>
<tab-item doc active>${svg('molecule')}<span>| S4DCLNT300 | SI_SAP_Return_OUT<span class="end">| |</span></span></tab-item>
<div class="grow"></div>
<button aria-label="Previous"><svg width="12" height="12"><path d="M9 1v10L3 6z" fill="#23294a"/></svg></button>
<button aria-label="Next" disabled><svg width="12" height="12"><path d="M3 1v10l6-5z" fill="#999"/></svg></button>
<button aria-label="List">${svg('list', 20)}</button>`);

define('editor-panel', () => `
<style>
  :host { flex: 1; min-width: 0; display: flex; flex-direction: column; border-left: 3px solid #5f8bb3; border-right: 2px solid #5f8bb3; background: #f2f3f8; }
  .tabs { display: flex; padding: 17px 0 0 9px; flex: none; }
  .lower { flex: none; height: 217px; display: flex; border-top: 2px solid #7fa2c4; padding-left: 3px; }
  .left { flex: 449; min-width: 0; display: flex; border-bottom: 3px solid #5f8bb3; }
  .foot { height: 12px; border-bottom: 2px solid #5f8bb3; margin-top: 1px; }
</style>
<editor-bar></editor-bar>
<config-form></config-form>
<div class="tabs" role="tablist"><tab-item first>Inbound Processing</tab-item><tab-item>Receiver</tab-item><tab-item active>Receiver Interfaces</tab-item><tab-item>Outbound Processing</tab-item><tab-item>Assigned Users</tab-item><tab-item>Advanced Settings</tab-item></div>
<receiver-panel></receiver-panel>
<split-bar></split-bar>
<div class="lower"><div class="left"><operation-list></operation-list></div><split-bar vertical></split-bar><interface-panel></interface-panel></div>
<split-bar class="foot"></split-bar>
<document-bar></document-bar>`);

define('builder-app', () => `
<style>
  :host { height: 100vh; display: flex; flex-direction: column; background: #f2f3f8; }
  .work { flex: 1; min-height: 0; display: flex; }
</style>
<title-bar>Configuration: Integration Builder (sappodap01_POD_00)</title-bar>
<main-bar></main-bar>
<div class="work"><object-panel></object-panel><split-bar vertical></split-bar><editor-panel></editor-panel></div>
<task-bar></task-bar>`);
</script>
</body>
</html>
